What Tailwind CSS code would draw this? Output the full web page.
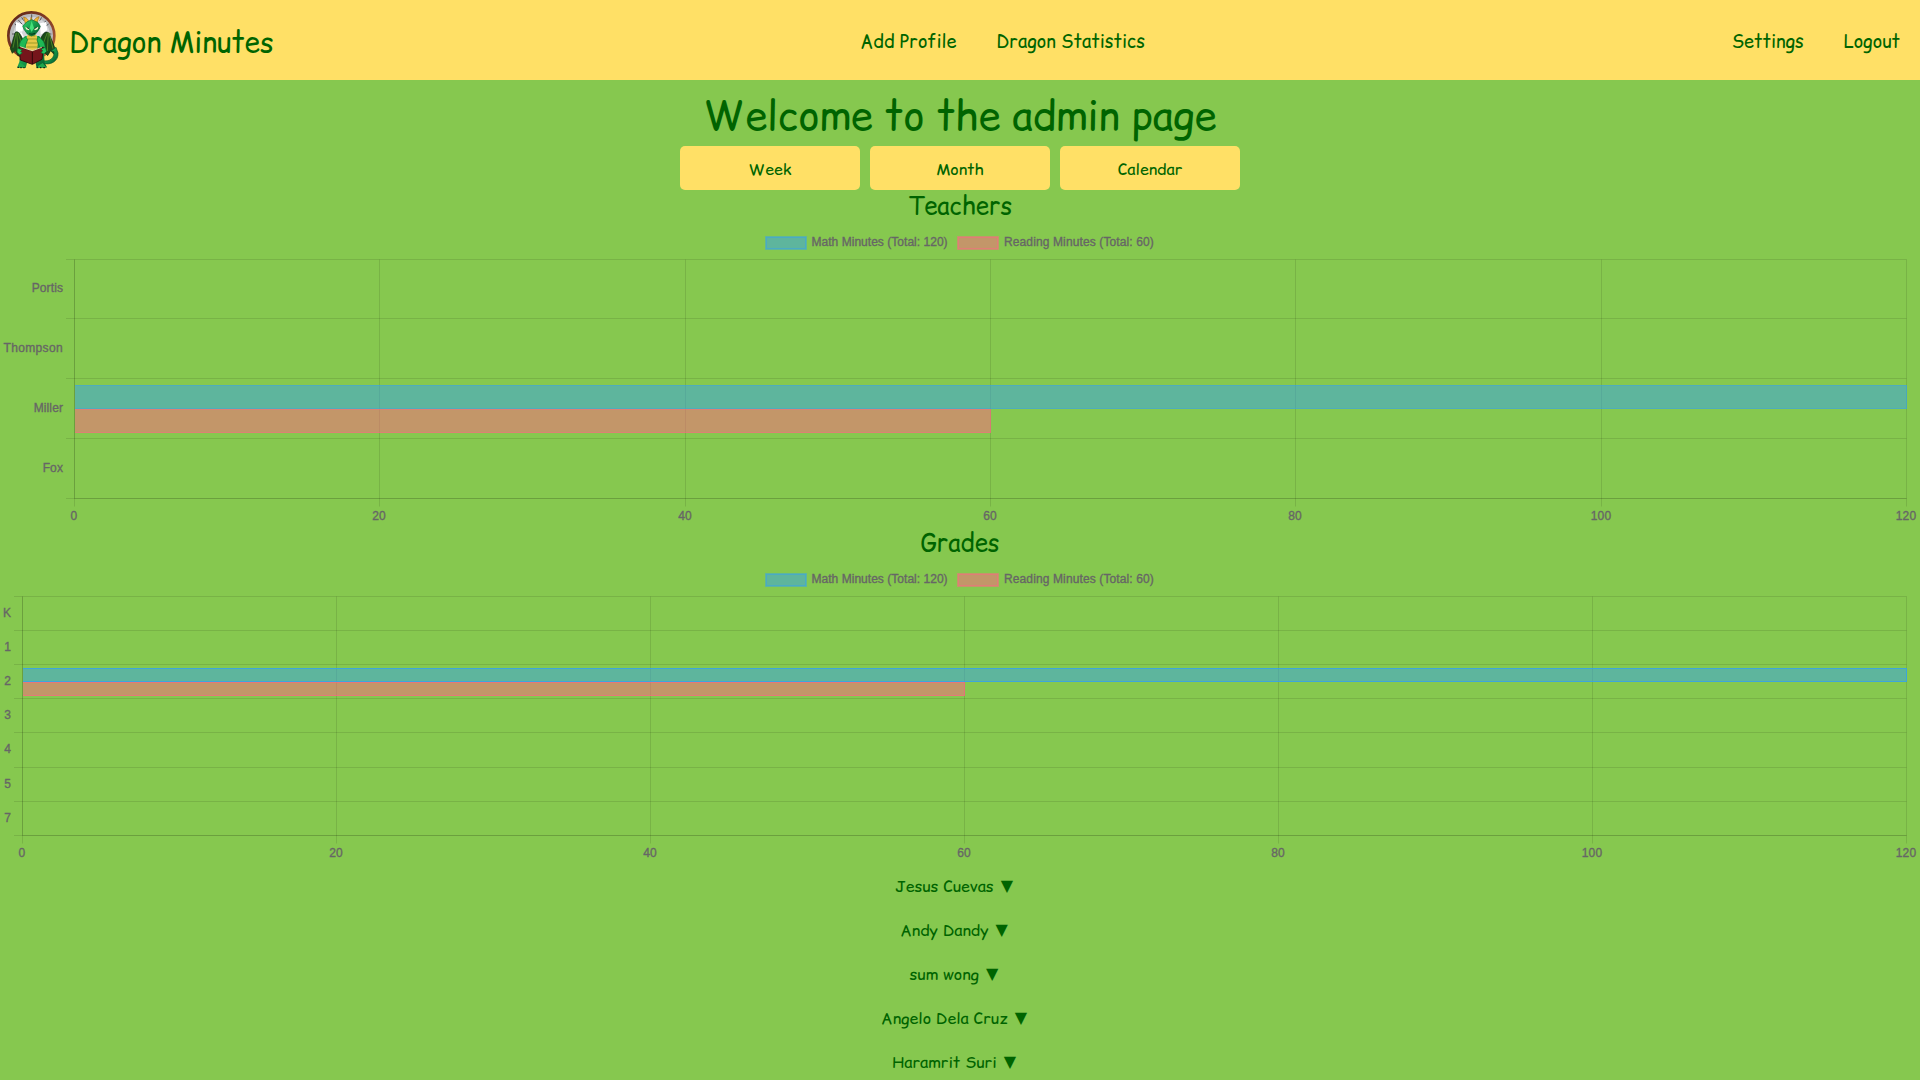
<!DOCTYPE html>
<html lang="en">
<head>
<meta charset="utf-8">
<title>Dragon Minutes</title>
<script src="https://cdn.jsdelivr.net/npm/@tailwindcss/browser@4"></script>
</head>
<body class="h-screen overflow-hidden bg-[#86c84f] text-[#006400] font-['Comic_Relief','Comic_Neue',cursive]">
<header class="flex h-20 items-center justify-between bg-[#ffe066] text-lg">
  <div class="flex items-center">
    <svg class="h-20 w-[60px]" viewBox="0 0 180 240">
      <defs>
        <linearGradient id="ring" x1="0" y1="0" x2="1" y2="1"><stop offset="0" stop-color="#5a2418"/><stop offset=".6" stop-color="#8d4328"/><stop offset="1" stop-color="#c06a3c"/></linearGradient>
        <linearGradient id="skin" x1="0" y1="0" x2="1" y2="1"><stop offset="0" stop-color="#35d66d"/><stop offset=".55" stop-color="#129447"/><stop offset="1" stop-color="#06542a"/></linearGradient>
      </defs>
      <ellipse cx="94" cy="107" rx="69" ry="70" fill="#b9b9bb" stroke="url(#ring)" stroke-width="8"/>
      <circle cx="95" cy="106" r="55" fill="#d5d6da"/>
      <path d="M95 43v13M65 52l6 10M125 52l-6 10M44 72l11 8M146 72l-11 8M36 102h12M154 102h-12M55 60l20 22M138 62l-24 28" stroke="#55565b" stroke-width="3"/>
      <path d="M48 66l22 8-2 20-20 4zM120 70l18-4 4 24-20 14zM62 92l-2 22 16 5z" fill="#fff"/>
      <path d="M69 120C60 96 50 92 45 98L31 146l6 14 9-9 9 17 11-12 12 9 2-35zM120 120c10-24 19-28 27-20l18 45-3 18-10-11-9 15-11-11-11 8-5-34z" fill="#1b4a1b" stroke="#0a2812" stroke-width="2"/>
      <path d="M48 99l-9 44M50 98l5 58M54 98l17 50M147 98l12 48M145 98l-3 55M142 98l-17 46" stroke="#4c8226" stroke-width="3"/>
      <path d="M126 181c22 7 39-8 36-26l-9-2 15-11 6 17c2 25-24 39-48 30z" fill="url(#skin)" stroke="#075127" stroke-width="2"/>
      <path d="M76 108h42l12 26 4 54 7 14-31 3-4-20H82l-5 19-26-1 7-17 5-53z" fill="url(#skin)"/>
      <path d="M83 104h26c7 17 5 38-2 53H83c-8-17-8-36 0-53z" fill="#e6c846"/>
      <path d="M80 117h32M79 129h35M80 141h33M86 107l20 1" stroke="#9c9d27" stroke-width="3"/>
      <path d="M76 110c-18 10-20 27-18 41l15-6 10-26zM115 110c18 10 22 27 20 39l-15-5-9-24z" fill="#1eb955" stroke="#087032" stroke-width="2"/>
      <path d="M78 78l-7-27c16 5 16 14 15 24zM108 77l9-27c-16 6-19 15-17 25zM90 72l3-20 8 20z" fill="#f0b934" stroke="#a96b12" stroke-width="2"/>
      <path d="M80 66l15-7 18 8 8 12-7 14-9 11-11 4-12-6-10-14-4-10z" fill="url(#skin)" stroke="#08692f" stroke-width="2"/>
      <path d="M95 63l-6 21 6 12 7-12z" fill="#45e078"/>
      <path d="M76 80l13 6-3 5-8-3zM115 80l-14 6 4 5 8-3z" fill="#eef3c8"/>
      <path d="M80 82l8 5M110 82l-8 5M87 101q9 4 18-1" stroke="#062a14" stroke-width="2.5" fill="none"/>
      <path d="M57 141l40 12 33-12-4 37-29 15-36-13z" fill="#75151b" stroke="#370b0d" stroke-width="3"/>
      <path d="M60 139l37 11 30-10-3 4-27 10-36-12z" fill="#ead3a2"/>
      <path d="M97 156v36" stroke="#2f0809" stroke-width="3"/>
      <path d="M52 145l15 4-5 5 5 5-8 5-8-7zM136 142l-13 5 5 5-5 6 9 4 8-8z" fill="#26c45b" stroke="#075d2b" stroke-width="2"/>
      <path d="M61 188l13 9 2 7-23-1zM115 197l13-8 12 14-30 1z" fill="#20a64d"/>
      <path d="M53 202h4m4 1h4m5 0h4M110 202h4m6 1h4m6 0h5" stroke="#1f1c14" stroke-width="4"/>
    </svg>
    <span class="ml-[9px] pt-[3px] text-[28px] leading-none">Dragon Minutes</span>
  </div>
  <nav class="flex gap-10 pt-1"><a>Add Profile</a><a>Dragon Statistics</a></nav>
  <nav class="flex gap-10 pt-1 pr-5"><a>Settings</a><a>Logout</a></nav>
</header>
<main>
  <h1 class="flex h-[66px] items-center justify-center pt-1.5 text-[40px] leading-none">Welcome to the admin page</h1>
  <div class="flex justify-center gap-2.5">
    <button class="h-11 w-[180px] rounded-[5px] bg-[#ffe066] pt-0.5">Week</button>
    <button class="h-11 w-[180px] rounded-[5px] bg-[#ffe066] pt-0.5">Month</button>
    <button class="h-11 w-[180px] rounded-[5px] bg-[#ffe066] pt-0.5">Calendar</button>
  </div>
  <h2 class="h-9 text-center text-2xl leading-8">Teachers</h2>
  <svg id="teachers" class="block h-[300px] w-full font-['Liberation_Sans',Arial,sans-serif] text-xs" viewBox="0 0 1920 300"></svg>
  <h2 class="h-[37px] text-center text-2xl leading-[34px]">Grades</h2>
  <svg id="grades" class="block h-[300px] w-full font-['Liberation_Sans',Arial,sans-serif] text-xs" viewBox="0 0 1920 300"></svg>
  <ul class="pt-px text-center">
    <li class="flex h-11 items-center justify-center gap-[7px] pr-3"><span>Jesus Cuevas</span><span class="font-['DejaVu_Sans',sans-serif]">▼</span></li>
    <li class="flex h-11 items-center justify-center gap-[7px] pr-3"><span>Andy Dandy</span><span class="font-['DejaVu_Sans',sans-serif]">▼</span></li>
    <li class="flex h-11 items-center justify-center gap-[7px] pr-3"><span>sum wong</span><span class="font-['DejaVu_Sans',sans-serif]">▼</span></li>
    <li class="flex h-11 items-center justify-center gap-[7px] pr-3"><span>Angelo Dela Cruz</span><span class="font-['DejaVu_Sans',sans-serif]">▼</span></li>
    <li class="flex h-11 items-center justify-center gap-[7px] pr-3"><span>Haramrit Suri</span><span class="font-['DejaVu_Sans',sans-serif]">▼</span></li>
  </ul>
</main>
<script>
const BLUE = '54,162,235', RED = '255,99,132';
const line = (x1, y1, x2, y2) => `<path d="M${x1} ${y1}L${x2} ${y2}" stroke="#000" stroke-opacity=".1"/>`;
const text = (x, y, t, anchor = 'start', spacing = 0) => `<text x="${x}" y="${y}" text-anchor="${anchor}" fill="#666" stroke="#666" stroke-width=".35" letter-spacing="${spacing}">${t}</text>`;
const key = (x, c) => `<rect x="${x + 1}" y="11" width="40" height="12" fill="rgba(${c},.5)" stroke="rgba(${c},.5)" stroke-width="2"/>`;
const bar = (x, y, w, h, c, edge) => `<rect x="${x}" y="${y}" width="${w}" height="${h}" fill="rgba(${c},.5)"/><path d="M${x} ${y + .5}H${x + w - .5}V${y + h - .5}H${x}" fill="none" stroke="rgba(${c},${edge})"/>`;

function draw(id, left, rows, labels, labelX, bars) {
  const right = 1906.5, top = rows[0], bottom = rows[rows.length - 1];
  let s = key(765, BLUE) + text(811.5, 20, 'Math Minutes (Total: 120)', 'start', .03) + key(957, RED) + text(1004, 20, 'Reading Minutes (Total: 60)', 'start', .12);
  rows.forEach(y => s += line(left - 8.5, y, right, y));
  for (let i = 0; i <= 6; i++) {
    const x = Math.floor(left + (right - left) * i / 6) + .5;
    s += line(x, top, x, bottom + 8) + text(x - .5, bottom + 21.5, i * 20, 'middle', .2);
  }
  s += line(left, top, left, bottom) + line(left, bottom, right, bottom);
  labels.forEach((l, i) => s += text(labelX, Math.round((rows[i] + rows[i + 1]) / 2) + 3, l, 'end', String(l) === 'Thompson' ? .35 : .1));
  bars.forEach(b => s += bar(left + .5, b[0], (right - left) * b[1] / 120, b[2], b[3], b[4]));
  document.getElementById(id).innerHTML = s;
}
draw('teachers', 74.5, [33.5, 92.5, 152.5, 212.5, 272.5], ['Portis', 'Thompson', 'Miller', 'Fox'], 63, [[159, 120, 24, BLUE, .4], [183, 60, 24, RED, .4]]);
draw('grades', 22.5, [33.5, 67.5, 101.5, 135.5, 169.5, 204.5, 238.5, 272.5], ['K', 1, 2, 3, 4, 5, 7], 11, [[105, 120, 14, BLUE, .8], [119, 60, 14, RED, .6]]);
</script>
</body>
</html>
